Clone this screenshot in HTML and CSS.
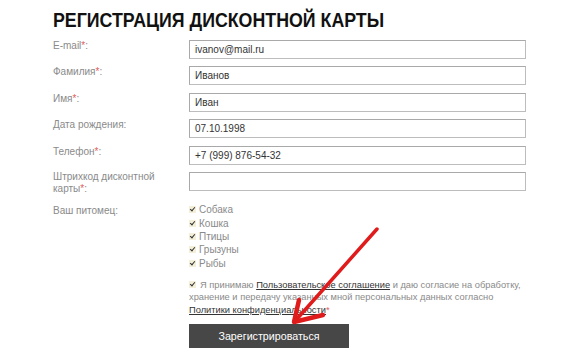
FILE: index.html
```html
<!DOCTYPE html>
<html lang="ru">
<head>
<meta charset="utf-8">
<title>Регистрация дисконтной карты</title>
<link rel="stylesheet" href="styles.css">
</head>
<body>
<div class="page">
  <h1 class="title">РЕГИСТРАЦИЯ ДИСКОНТНОЙ КАРТЫ</h1>
  <form class="form">
    <div class="row">
      <label class="label">E-mail<span class="req">*</span>:</label>
      <div class="input">ivanov@mail.ru</div>
    </div>
    <div class="row">
      <label class="label">Фамилия<span class="req">*</span>:</label>
      <div class="input">Иванов</div>
    </div>
    <div class="row">
      <label class="label">Имя<span class="req">*</span>:</label>
      <div class="input">Иван</div>
    </div>
    <div class="row">
      <label class="label">Дата рождения:</label>
      <div class="input">07.10.1998</div>
    </div>
    <div class="row">
      <label class="label">Телефон<span class="req">*</span>:</label>
      <div class="input">+7 (999) 876-54-32</div>
    </div>
    <div class="row">
      <label class="label label-two">Штрихкод дисконтной карты<span class="req">*</span>:</label>
      <div class="input"></div>
    </div>
    <div class="row row-pets">
      <label class="label">Ваш питомец:</label>
      <ul class="pets">
        <li><span class="cb"></span>Собака</li>
        <li><span class="cb"></span>Кошка</li>
        <li><span class="cb"></span>Птицы</li>
        <li><span class="cb"></span>Грызуны</li>
        <li><span class="cb"></span>Рыбы</li>
      </ul>
    </div>
    <div class="row row-agree">
      <div class="spacer"></div>
      <p class="agree"><span class="cb"></span>Я принимаю <a class="link">Пользовательское соглашение</a> и даю согласие на обработку, хранение и передачу указанных мной персональных данных согласно <a class="link">Политики конфиденциальности</a><span class="req">*</span></p>
    </div>
    <div class="row row-btn">
      <div class="spacer"></div>
      <div class="btn">Зарегистрироваться</div>
    </div>
  </form>
  <svg class="arrow" width="585" height="356" viewBox="0 0 585 356">
    <g stroke="#e01b1b" stroke-linecap="round" stroke-linejoin="round" fill="none">
      <line x1="377" y1="229" x2="296" y2="320" stroke-width="3.5"/>
      <polyline points="299,300 294,322 323,315" stroke-width="4.5"/>
    </g>
  </svg>
</div>
</body>
</html>
```

FILE: styles.css
```css
html, body {
  margin: 0;
  padding: 0;
  background: #ffffff;
}
body {
  font-family: "Liberation Sans", Arial, sans-serif;
  width: 585px;
  height: 356px;
  overflow: hidden;
}
.page {
  position: relative;
  padding: 8px 0 0 53px;
}
.title {
  margin: 0;
  font-size: 17.8px;
  line-height: 24px;
  font-weight: bold;
  color: #111;
  transform: scaleY(1.1);
  transform-origin: left center;
}
.form {
  margin-top: 8px;
  display: flex;
  flex-direction: column;
}
.row {
  display: grid;
  grid-template-columns: 136px 337px;
  height: 26.4px;
}
.label {
  font-size: 10px;
  line-height: 12px;
  color: #8a8a8a;
  padding-top: 0;
}
.label-two {
  margin-top: -1px;
  line-height: 12px;
}
.req {
  color: #e06060;
}
.input {
  box-sizing: border-box;
  height: 19px;
  border: 1px solid #bdbdbd;
  border-top-color: #a9a9a9;
  border-left-color: #a9a9a9;
  background: #fff;
  font-size: 10px;
  line-height: 17px;
  padding-left: 5px;
  color: #333;
}
.row-pets {
  height: auto;
  margin-top: 5px;
}
.row-pets .label {
  padding-top: 2px;
}
.pets {
  list-style: none;
  margin: 0;
  padding: 0;
}
.pets li {
  font-size: 10px;
  line-height: 13.3px;
  color: #8a8a8a;
  display: flex;
  align-items: center;
}
.cb {
  display: inline-block;
  width: 7px;
  height: 7px;
  margin-right: 3px;
  background: #f3efd9;
  position: relative;
  flex: none;
}
.cb::after {
  content: "";
  position: absolute;
  left: 2px;
  top: 0px;
  width: 2px;
  height: 4px;
  border: solid #333;
  border-width: 0 1.5px 1.5px 0;
  transform: rotate(40deg);
}
.row-agree {
  height: auto;
  margin-top: 9px;
}
.agree {
  margin: 0;
  font-size: 9.3px;
  line-height: 12.5px;
  color: #8a8a8a;
}
.agree .cb {
  margin-right: 4px;
  vertical-align: 0;
}
.link {
  color: #333;
  text-decoration: underline;
}
.row-btn {
  height: auto;
  margin-top: 8px;
}
.btn {
  width: 160px;
  height: 24px;
  background: #474747;
  color: #fff;
  font-size: 10.7px;
  line-height: 24px;
  text-align: center;
}
.arrow {
  position: absolute;
  left: 0;
  top: 0;
  pointer-events: none;
}
```
